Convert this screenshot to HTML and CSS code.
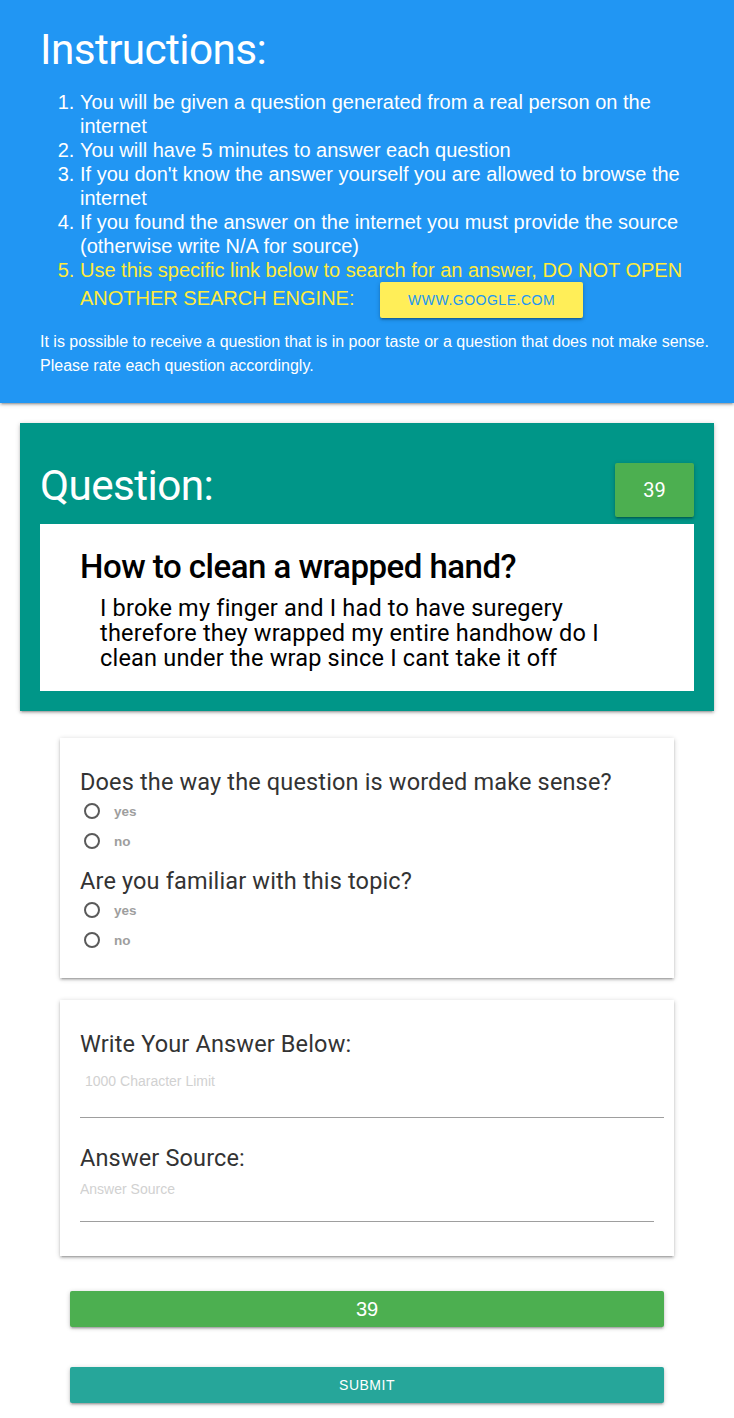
FILE: index.html
```html
<!DOCTYPE html>
<html lang="en">
<head>
<meta charset="utf-8">
<title>Question</title>
<link rel="stylesheet" href="styles.css">
</head>
<body>
<header class="instructions">
  <h1 class="big-title">Instructions:</h1>
  <ol class="steps">
    <li>You will be given a question generated from a real person on the internet</li>
    <li>You will have 5 minutes to answer each question</li>
    <li>If you don't know the answer yourself you are allowed to browse the internet</li>
    <li>If you found the answer on the internet you must provide the source (otherwise write N/A for source)</li>
    <li class="warn">Use this specific link below to search for an answer, DO NOT OPEN ANOTHER SEARCH ENGINE: <a class="google-btn" href="#">www.google.com</a></li>
  </ol>
  <p class="note">It is possible to receive a question that is in poor taste or a question that does not make sense. Please rate each question accordingly.</p>
</header>

<main class="page">
  <section class="question-card">
    <div class="question-head">
      <h2 class="big-title">Question:</h2>
      <div class="timer-badge">39</div>
    </div>
    <div class="question-box">
      <h3 class="question-title">How to clean a wrapped hand?</h3>
      <p class="question-body">I broke my finger and I had to have suregery therefore they wrapped my entire handhow do I clean under the wrap since I cant take it off</p>
    </div>
  </section>

  <section class="card rating-card">
    <p class="card-label">Does the way the question is worded make sense?</p>
    <label class="radio"><input type="radio" name="sense"><span class="dot"></span><span class="radio-text">yes</span></label>
    <label class="radio"><input type="radio" name="sense"><span class="dot"></span><span class="radio-text">no</span></label>
    <p class="card-label second">Are you familiar with this topic?</p>
    <label class="radio"><input type="radio" name="familiar"><span class="dot"></span><span class="radio-text">yes</span></label>
    <label class="radio"><input type="radio" name="familiar"><span class="dot"></span><span class="radio-text">no</span></label>
  </section>

  <section class="card answer-card">
    <p class="card-label">Write Your Answer Below:</p>
    <textarea class="answer-area" placeholder="1000 Character Limit"></textarea>
    <p class="card-label source-label">Answer Source:</p>
    <input class="source-input" type="text" placeholder="Answer Source">
  </section>

  <div class="timer-bar">39</div>
  <button class="submit-btn" type="button">SUBMIT</button>
</main>
</body>
</html>
```

FILE: styles.css
```css
html, body {
  margin: 0;
  padding: 0;
  background: #ffffff;
}

body {
  font-family: "Liberation Sans", Arial, sans-serif;
  min-height: 1418px;
}

.instructions {
  background: #2196F3;
  color: #ffffff;
  padding: 27px 20px 25px 40px;
  box-shadow: 0 2px 2px 0 rgba(0,0,0,0.14), 0 3px 1px -2px rgba(0,0,0,0.12), 0 1px 5px 0 rgba(0,0,0,0.2);
  position: relative;
  z-index: 1;
}

.big-title {
  font-family: Roboto, "Liberation Sans", sans-serif;
  font-weight: 400;
  font-size: 42.3px;
  line-height: 46px;
  letter-spacing: -0.6px;
  margin: 0;
  color: #ffffff;
}

.instructions .big-title {
  margin-bottom: 17px;
}

.steps {
  margin: 0;
  padding-left: 40px;
  font-size: 20px;
  line-height: 24px;
}

.steps .warn {
  color: #FFEB3B;
}

.google-btn {
  display: inline-block;
  height: 36px;
  line-height: 36px;
  padding: 0 28px;
  margin-left: 20px;
  background: #FFEE58;
  color: #2196F3;
  font-size: 14px;
  letter-spacing: 0.5px;
  text-transform: uppercase;
  text-decoration: none;
  border-radius: 2px;
  box-shadow: 0 2px 2px 0 rgba(0,0,0,0.14), 0 3px 1px -2px rgba(0,0,0,0.12), 0 1px 5px 0 rgba(0,0,0,0.2);
}

.note {
  margin: 12px 0 0;
  font-size: 16px;
  line-height: 24px;
}

.page {
  padding: 20px 0 14px;
}

.question-card {
  margin: 0 20px;
  background: #009688;
  padding: 40px 20px 20px;
  box-shadow: 0 2px 2px 0 rgba(0,0,0,0.14), 0 3px 1px -2px rgba(0,0,0,0.12), 0 1px 5px 0 rgba(0,0,0,0.2);
}

.question-head {
  display: flex;
  justify-content: space-between;
  align-items: flex-start;
  margin-bottom: 7px;
}

.timer-badge {
  width: 79px;
  height: 54px;
  background: #4CAF50;
  color: #ffffff;
  font-family: Roboto, "Liberation Sans", sans-serif;
  font-size: 20px;
  display: flex;
  align-items: center;
  justify-content: center;
  border-radius: 2px;
  box-shadow: 0 2px 2px 0 rgba(0,0,0,0.14), 0 3px 1px -2px rgba(0,0,0,0.12), 0 1px 5px 0 rgba(0,0,0,0.2);
}

.question-box {
  background: #ffffff;
  padding: 25px 40px 20px;
}

.question-title {
  margin: 0;
  font-family: Roboto, "Liberation Sans", sans-serif;
  font-weight: 500;
  font-size: 33px;
  line-height: 36px;
  letter-spacing: -0.5px;
  color: #000000;
}

.question-body {
  margin: 11px 20px 0;
  font-family: Roboto, "Liberation Sans", sans-serif;
  font-size: 23.5px;
  line-height: 25px;
  letter-spacing: 0.2px;
  color: #000000;
}

.card {
  margin: 27px 60px 0;
  background: #ffffff;
  padding: 30px 20px 23px;
  box-shadow: 0 2px 2px 0 rgba(0,0,0,0.14), 0 3px 1px -2px rgba(0,0,0,0.12), 0 1px 5px 0 rgba(0,0,0,0.2);
}

.answer-card {
  margin-top: 22px;
  padding-bottom: 34px;
}

.card-label {
  margin: 0;
  font-family: Roboto, "Liberation Sans", sans-serif;
  font-size: 23.5px;
  line-height: 28px;
  letter-spacing: 0.15px;
  color: #333333;
}

.card-label.second {
  margin-top: 11px;
}

.radio {
  display: flex;
  align-items: center;
  height: 30px;
  cursor: pointer;
}

.radio input {
  position: absolute;
  opacity: 0;
  pointer-events: none;
}

.dot {
  width: 12px;
  height: 12px;
  margin-left: 4px;
  border: 2px solid #5a5a5a;
  border-radius: 50%;
}

.radio-text {
  margin-left: 14px;
  font-size: 13.5px;
  font-weight: bold;
  color: #9e9e9e;
}

.answer-area {
  display: block;
  box-sizing: border-box;
  width: calc(100% + 10px);
  height: 52px;
  margin: 8px 0 0;
  padding: 7px 5px 0;
  border: none;
  border-bottom: 1px solid #9e9e9e;
  resize: none;
  outline: none;
  font-family: "Liberation Sans", Arial, sans-serif;
  font-size: 14px;
  line-height: 16px;
  background: transparent;
}

.source-label {
  margin-top: 26px;
}

.source-input {
  display: block;
  box-sizing: border-box;
  width: 100%;
  height: 50px;
  margin: 0;
  padding: 9px 0 24px;
  border: none;
  border-bottom: 1px solid #9e9e9e;
  outline: none;
  font-family: "Liberation Sans", Arial, sans-serif;
  font-size: 14px;
  line-height: 16px;
  background: transparent;
}

.answer-area::placeholder,
.source-input::placeholder {
  color: #d1d1d1;
}

.timer-bar {
  margin: 35px 70px 0;
  height: 36px;
  line-height: 36px;
  background: #4CAF50;
  color: #ffffff;
  text-align: center;
  font-size: 20px;
  border-radius: 2px;
  box-shadow: 0 2px 2px 0 rgba(0,0,0,0.14), 0 3px 1px -2px rgba(0,0,0,0.12), 0 1px 5px 0 rgba(0,0,0,0.2);
}

.submit-btn {
  display: block;
  box-sizing: border-box;
  width: calc(100% - 140px);
  margin: 40px 70px 0;
  height: 36px;
  border: none;
  background: #26A69A;
  color: #ffffff;
  font-family: "Liberation Sans", Arial, sans-serif;
  font-size: 14px;
  letter-spacing: 0.5px;
  border-radius: 2px;
  cursor: pointer;
  box-shadow: 0 2px 2px 0 rgba(0,0,0,0.14), 0 3px 1px -2px rgba(0,0,0,0.12), 0 1px 5px 0 rgba(0,0,0,0.2);
}
```
